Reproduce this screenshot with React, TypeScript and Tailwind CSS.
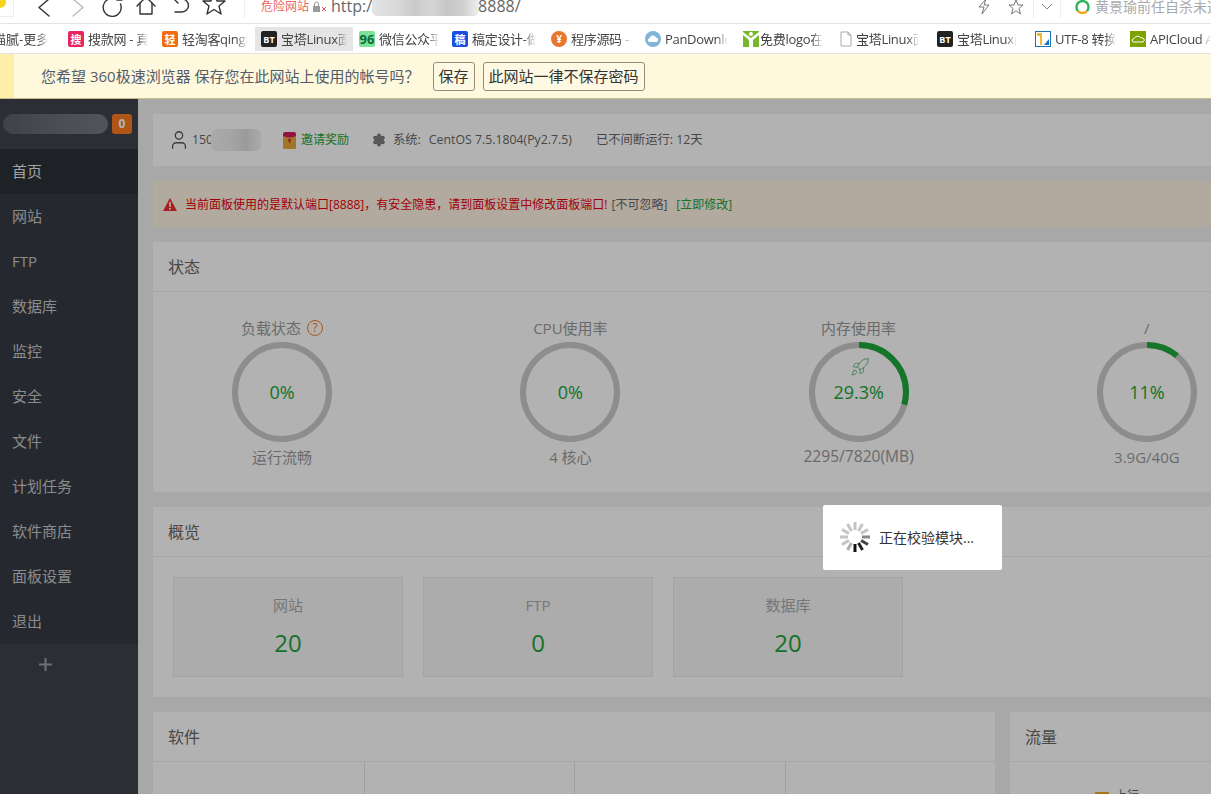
import { Rocket, User, Settings } from "lucide-react";

const font = "font-['Open_Sans','Noto_Sans_CJK_SC',sans-serif]";
const fade = "[mask-image:linear-gradient(to_right,black_82%,transparent)]";

function BookIcon({ bg, label, text = "text-white", size = "text-[11px]" }: { bg: string; label: string; text?: string; size?: string }) {
  return (
    <span className={`w-4 h-4 shrink-0 flex items-center justify-center rounded-[2px] font-bold leading-none overflow-hidden ${bg} ${text} ${size}`}>
      {label}
    </span>
  );
}

function Bookmark({ w, tw, label, icon, active }: { w: string; tw: string; label: string; icon: React.ReactNode; active?: boolean }) {
  return (
    <div className={`${w} shrink-0 h-[24px] flex items-center`}>
      <div className={`flex items-center gap-[4px] h-[24px] pl-[6px] -ml-[6px] pr-[6px] ${active ? "bg-[#e5e5e5]" : ""}`}>
        {icon}
        <span className={`${tw} block overflow-hidden whitespace-nowrap text-[13px] tracking-[-0.3px] leading-[24px] text-[#444] ${fade}`}>{label}</span>
      </div>
    </div>
  );
}

const stroke = { fill: "none", stroke: "#333", strokeWidth: 1.4, strokeLinejoin: "round" as const, strokeLinecap: "round" as const };

function ToolIcons() {
  return (
    <div className="flex gap-[8px] -mt-[6px] ml-[31px]">
      <svg width="26" height="26" viewBox="0 0 26 26" {...stroke}><path d="M18 5 L8 13.5 L18 22" /></svg>
      <svg width="26" height="26" viewBox="0 0 26 26" {...stroke} stroke="#bbb"><path d="M8 5 L18 13.5 L8 22" /></svg>
      <svg width="26" height="26" viewBox="0 0 26 26" {...stroke}><path d="M21.5 10 A9 9 0 1 1 17.5 5.5" /><path d="M18 1 V6 H23" /></svg>
      <svg width="26" height="26" viewBox="0 0 26 26" {...stroke}><path d="M4 12 L13 3 L22 12" /><path d="M7 9 V20 H19 V9" /></svg>
      <svg width="26" height="26" viewBox="0 0 26 26" {...stroke}><path d="M8 5 H15 A6 6 0 0 1 15 18 H8" /><path d="M11 1 L7 5 L11 9" /></svg>
      <svg width="26" height="26" viewBox="0 0 26 26" {...stroke}><path d="M13 -1 L16 7 L24 7 L18 12 L20 20 L13 15.5 L6 20 L8 12 L2 7 L10 7 Z" /></svg>
    </div>
  );
}

function TopBar() {
  return (
    <div className="h-[24px] shrink-0 flex items-start border-b border-[#e4e4e4] overflow-hidden bg-white relative">
      <div className="w-[14px] h-[17px] border-r border-b border-[#eee] overflow-hidden shrink-0 -mr-[14px]">
        <div className="w-[6px] h-[8px] bg-[#f8d21c] rounded-br-full" />
      </div>
      <ToolIcons />
      <div className="w-px h-[18px] bg-[#eee] ml-[17px]" />
      <span className="ml-[16px] mt-[1px] text-[12px] leading-[12px] text-[#e8695f]">危险网站</span>
      <svg className="ml-[3px] mt-[1px]" width="16" height="12" viewBox="0 0 16 12">
        <rect x="1" y="5" width="7" height="6" fill="#999" />
        <path d="M2.5 5 V3 A2 2 0 0 1 6.5 3 V5" fill="none" stroke="#999" />
        <path d="M10 6 L14 10 M14 6 L10 10" stroke="#e0584f" />
      </svg>
      <span className="ml-[3px] text-[16px] leading-[12px] text-[#666]">http:/</span>
      <div className="w-[107px] h-[16px] rounded-b-[5px] bg-[linear-gradient(to_right,#e4e4e4_0%,#d8d8d8_25%,#c9c9c9_40%,#d6d6d6_55%,#c6c6c6_70%,#cfcfcf_85%,#efefef_100%)]" />
      <span className="-ml-[1px] text-[16px] leading-[12px] text-[#666]">8888/</span>
      <div className="flex-1" />
      <svg className="mt-[-1px]" width="16" height="16" viewBox="0 0 16 16" fill="none" stroke="#777">
        <path d="M10 0 L3 8 H8 L6 15 L13 6 H8 Z" />
      </svg>
      <svg className="ml-[16px] mt-[-1px]" width="16" height="16" viewBox="0 0 16 16" fill="none" stroke="#777">
        <path d="M8 1 L10 6 L15 6 L11 9.5 L12.5 15 L8 11.8 L3.5 15 L5 9.5 L1 6 L6 6 Z" />
      </svg>
      <div className="w-px h-[18px] bg-[#eee] ml-[9px]" />
      <svg className="ml-[7px] mt-[3px]" width="12" height="8" viewBox="0 0 12 8" fill="none" stroke="#888">
        <path d="M1 1 L6 6 L11 1" />
      </svg>
      <div className="w-px h-[18px] bg-[#eee] ml-[7px]" />
      <svg className="ml-[14px] mt-[-1px] shrink-0" width="15" height="15" viewBox="0 0 15 15" fill="none" strokeWidth="2.4">
        <path d="M3 12 A6 6 0 1 1 12 12" stroke="#2fb35a" />
        <path d="M3 12 A6 6 0 0 0 12 12" stroke="#f5a623" />
      </svg>
      <span className="ml-[5px] w-[116px] overflow-hidden text-[14px] leading-[14px] text-[#aaa] whitespace-nowrap">黄景瑜前任自杀未遂</span>
    </div>
  );
}

function Bookmarks() {
  return (
    <div className="h-[30px] shrink-0 flex items-start pt-[3px] border-b border-[#e2e2e2] bg-white overflow-hidden">
      <span className="w-[68px] shrink-0 text-[13px] leading-[24px] text-[#444] whitespace-nowrap overflow-hidden">
        <span className={`block w-[55px] -ml-[7px] ${fade} overflow-hidden`}>猫腻-更多</span>
      </span>
      <Bookmark w="w-[94px]" tw="w-[60px]" label="搜款网 - 真" icon={<BookIcon bg="bg-[#e8265f]" label="搜" />} />
      <Bookmark w="w-[99px]" tw="w-[66px]" label="轻淘客qingt" icon={<BookIcon bg="bg-[#f26b0f]" label="轻" />} />
      <Bookmark w="w-[98px]" tw="w-[66px]" label="宝塔Linux面" active icon={<BookIcon bg="bg-[#222]" label="BT" size="text-[9px]" />} />
      <Bookmark w="w-[93px]" tw="w-[60px]" label="微信公众平" icon={<BookIcon bg="bg-[#7ce29a]" text="text-[#0b6b3a]" label="96" size="text-[13px]" />} />
      <Bookmark w="w-[99px]" tw="w-[64px]" label="稿定设计-做" icon={<BookIcon bg="bg-[#1a4fe0]" label="稿" />} />
      <Bookmark w="w-[94px]" tw="w-[60px]" label="程序源码 –" icon={<BookIcon bg="bg-[#e8762c] rounded-full" label="¥" size="text-[10px]" />} />
      <Bookmark
        w="w-[98px]"
        tw="w-[63px]"
        label="PanDownlo"
        icon={
          <svg className="shrink-0" width="16" height="16" viewBox="0 0 16 16">
            <circle cx="8" cy="8" r="8" fill="#7fb6d8" />
            <path d="M4 11 A2.2 2.2 0 0 1 4.5 7 A3.5 3.5 0 0 1 11 6.5 A2.4 2.4 0 0 1 12 11 Z" fill="#fff" />
          </svg>
        }
      />
      <Bookmark
        w="w-[95px]"
        tw="w-[63px]"
        label="免费logo在"
        icon={
          <svg className="shrink-0 -mr-[3px]" width="16" height="16" viewBox="0 0 16 16">
            <rect width="16" height="16" fill="#76b82a" />
            <circle cx="8" cy="3" r="2" fill="#fff" />
            <path d="M0 1 L8 7 L16 1 V4 L10 9 V16 H6 V9 L0 4 Z" fill="#fff" />
          </svg>
        }
      />
      <Bookmark
        w="w-[99px]"
        tw="w-[63px]"
        label="宝塔Linux面"
        icon={
          <svg className="shrink-0 -mr-[2px]" width="16" height="16" viewBox="0 0 16 16" fill="#fff" stroke="#aaa">
            <path d="M3 1 H10 L13 4 V15 H3 Z" />
            <path d="M10 1 V4 H13" fill="none" />
          </svg>
        }
      />
      <Bookmark w="w-[98px]" tw="w-[60px]" label="宝塔Linux面" icon={<BookIcon bg="bg-[#222]" label="BT" size="text-[9px]" />} />
      <Bookmark
        w="w-[95px]"
        tw="w-[61px]"
        label="UTF-8 转换"
        icon={
          <svg className="shrink-0" width="16" height="16" viewBox="0 0 16 16">
            <rect x="0.5" y="0.5" width="15" height="15" fill="#fff" stroke="#1a74bb" />
            <path d="M2 2 H7 V14 H5 V5 H2 Z" fill="#f2b632" />
            <path d="M9 14 L14 8 V14 Z" fill="#1a74bb" />
          </svg>
        }
      />
      <Bookmark
        w="w-[81px]"
        tw="w-[61px]"
        label="APICloud A"
        icon={
          <svg className="shrink-0" width="16" height="16" viewBox="0 0 16 16">
            <rect width="16" height="16" fill="#7ea300" />
            <path d="M3 11 A2 2 0 0 1 4 7.5 A4 4 0 0 1 11 7 A2 2 0 0 1 13 11 Z" fill="none" stroke="#fff" />
          </svg>
        }
      />
    </div>
  );
}

function InfoBar() {
  return (
    <div className="h-[45px] shrink-0 flex items-center bg-[#fef8dc] border-b border-[#c9bd8e]">
      <div className="w-[14px] h-full bg-[#fdeea8] border-r border-[#f7ecc0]" />
      <span className="ml-[27px] text-[15px] text-[#555c6a] whitespace-nowrap">您希望 360极速浏览器 保存您在此网站上使用的帐号吗？</span>
      <button className="ml-[13px] w-[42px] h-[29px] text-[15px] text-[#333] border border-[#948c78] rounded-[3px] bg-[#fef9e3]">保存</button>
      <button className="ml-[8px] w-[162px] h-[29px] text-[15px] text-[#333] border border-[#948c78] rounded-[3px] bg-[#fef9e3] whitespace-nowrap">此网站一律不保存密码</button>
    </div>
  );
}

const menu = ["首页", "网站", "FTP", "数据库", "监控", "安全", "文件", "计划任务", "软件商店", "面板设置", "退出"];

function Sidebar() {
  return (
    <aside className="w-[138px] shrink-0 bg-[#3e444d] flex flex-col">
      <div className="h-[50px] shrink-0 flex items-start pt-[15px] pl-[3px]">
        <div className="w-[105px] h-[20px] rounded-[10px] bg-[linear-gradient(to_right,#5a6068_0%,#646a72_30%,#6c7279_60%,#737980_95%)]" />
        <span className="ml-[4px] w-[20px] h-[20px] rounded-[3px] bg-[#fa7a22] text-white text-[12px] font-bold flex items-center justify-center">0</span>
      </div>
      <nav className="bg-[#353b44] flex flex-col">
        {menu.map((m, i) => (
          <div key={m} className={`h-[45px] pl-[12px] pb-[1px] flex items-center text-[15px] ${i === 0 ? "bg-[#2c3138] text-[#e8e8e8]" : "text-[#c8c8c8]"}`}>
            {m}
          </div>
        ))}
      </nav>
      <div className="h-[42px] flex items-center justify-center pr-[48px] pb-[1px] text-[#999]">
        <svg width="13" height="13" viewBox="0 0 13 13" fill="#a0a0a0">
          <rect x="5.5" width="2" height="13" />
          <rect y="5.5" width="13" height="2" />
        </svg>
      </div>
    </aside>
  );
}

function Ring({ pct, title, value, sub, rocket, help, subSize = "text-[15px]" }: { pct: number; title: string; value: string; sub: string; rocket?: boolean; help?: boolean; subSize?: string }) {
  const r = 47;
  const c = 2 * Math.PI * r;
  return (
    <div className="flex flex-col items-center">
      <div className="h-[20px] flex items-center text-[15px] text-[#999] whitespace-nowrap">
        {title}
        {help && <span className="ml-[6px] w-[16px] h-[16px] rounded-full border border-[#fa7a22] text-[#fa7a22] text-[12px] flex items-center justify-center leading-none">?</span>}
      </div>
      <div className="relative w-[100px] h-[100px] mt-[4px]">
        <svg width="100" height="100" viewBox="0 0 100 100" className="block">
          <circle cx="50" cy="50" r={r} fill="none" stroke="#cbcbcb" strokeWidth="6" />
          {pct > 0 && (
            <circle cx="50" cy="50" r={r} fill="none" stroke="#1eaa3a" strokeWidth="6" strokeDasharray={`${(c * pct) / 100} ${c}`} transform="rotate(-90 50 50)" />
          )}
        </svg>
        <div className="absolute inset-0 flex items-center justify-center text-[18px] text-[#20a53a]">{value}</div>
        {rocket && <Rocket className="absolute left-[41px] top-[15px] text-[#4fb069]" size={20} strokeWidth={1} />}
      </div>
      <div className={`mt-[5px] h-[20px] flex items-center text-[#999] whitespace-nowrap ${subSize}`}>{sub}</div>
    </div>
  );
}

function PanelHead({ title }: { title: string }) {
  return <div className="h-[50px] flex items-center pl-[15px] border-b border-[#eee] text-[16px] text-[#666]">{title}</div>;
}

function Card({ title, value }: { title: string; value: string }) {
  return (
    <div className="w-[230px] h-[100px] bg-[#f6f6f6] border border-[#eaeaea] flex flex-col items-center pt-[17px]">
      <div className="text-[15px] leading-[20px] text-[#aaa]">{title}</div>
      <div className="text-[24px] leading-[34px] mt-[11px] text-[#20a53a]">{value}</div>
    </div>
  );
}

function Main() {
  return (
    <main className="flex-1 min-w-0 overflow-hidden bg-[#f1f1f1] pl-[15px] pt-[15px] flex flex-col gap-[15px]">
      <div className="h-[52px] shrink-0 bg-white flex items-center pl-[15px] text-[12.3px] text-[#666] whitespace-nowrap">
        <User size={22} strokeWidth={1.4} className="text-[#555]" />
        <span className="ml-[2px] w-[72px] relative block">
          150
          <span className="absolute left-[19px] -top-[2px] w-[50px] h-[22px] bg-[linear-gradient(to_right,#f4f4f4,#ececec_40%,#dedede_70%,#f4f4f4)] rounded-[6px]" />
        </span>
        <svg className="ml-[19px]" width="13" height="17" viewBox="0 0 13 17">
          <rect y="2" width="13" height="15" rx="1.5" fill="#e8a93a" />
          <path d="M0 2 A2 2 0 0 1 2 0 H11 A2 2 0 0 1 13 2 V4 Q6.5 7 0 4 Z" fill="#d41c5c" />
          <path d="M5 7 H8 L6.5 12 Z" fill="#d41c5c" />
        </svg>
        <span className="ml-[5px] text-[12px] text-[#20a53a]">邀请奖励</span>
        <Settings className="ml-[23px] text-[#777]" size={14} fill="#888" />
        <span className="ml-[7px]">系统:</span>
        <span className="ml-[8px]">CentOS 7.5.1804(Py2.7.5)</span>
        <span className="ml-[24px]">已不间断运行: 12天</span>
      </div>

      <div className="h-[46px] shrink-0 bg-[#fff2e4] flex items-center pl-[10px] pt-[1px] text-[12px] whitespace-nowrap">
        <svg width="14" height="13" viewBox="0 0 14 13">
          <path d="M7 0 L14 13 H0 Z" fill="#ef2d2d" />
          <rect x="6.2" y="4" width="1.6" height="5" fill="#fff" />
          <rect x="6.2" y="10" width="1.6" height="1.6" fill="#fff" />
        </svg>
        <span className="ml-[8px] text-[#e8000b] font-normal">当前面板使用的是默认端口[8888]，有安全隐患，请到面板设置中修改面板端口!</span>
        <span className="ml-[4px] text-[#666]">[不可忽略]</span>
        <span className="ml-[9px] text-[#20a53a]">[立即修改]</span>
      </div>

      <section className="h-[250px] shrink-0 bg-white">
        <PanelHead title="状态" />
        <div className="-ml-[15px] w-[1153px] grid grid-cols-4 pt-[26px]">
          <Ring pct={0} title="负载状态" value="0%" sub="运行流畅" help />
          <Ring pct={0} title="CPU使用率" value="0%" sub="4 核心" />
          <Ring pct={29.3} title="内存使用率" value="29.3%" sub="2295/7820(MB)" subSize="text-[15.6px]" rocket />
          <Ring pct={11} title="/" value="11%" sub="3.9G/40G" />
        </div>
      </section>

      <section className="h-[190px] shrink-0 bg-white">
        <PanelHead title="概览" />
        <div className="flex gap-[20px] pl-[20px] pt-[20px]">
          <Card title="网站" value="20" />
          <Card title="FTP" value="0" />
          <Card title="数据库" value="20" />
        </div>
      </section>

      <div className="flex gap-[15px] flex-1 min-h-0">
        <section className="w-[842px] shrink-0 bg-white">
          <PanelHead title="软件" />
          <div className="grid grid-cols-[212px_210px_211px_1fr] h-full">
            <div className="border-r border-[#e4e4ee]" />
            <div className="border-r border-[#e4e4ee]" />
            <div className="border-r border-[#e4e4ee]" />
            <div />
          </div>
        </section>
        <section className="flex-1 bg-white overflow-hidden">
          <PanelHead title="流量" />
          <div className="flex items-center pl-[85px] pt-[28px]">
            <span className="w-[14px] h-[8px] bg-[#f5a623]" />
            <span className="ml-[6px] text-[12px] leading-[12px] text-[#666]">上行</span>
          </div>
        </section>
      </div>
    </main>
  );
}

function Spinner() {
  const colors = ["#8a8a8a", "#444", "#222", "#111", "#b0b0b0", "#c4c4c4", "#c4c4c4", "#c4c4c4", "#c4c4c4", "#c4c4c4", "#c4c4c4", "#c4c4c4"];
  return (
    <svg width="32" height="32" viewBox="0 0 32 32">
      {colors.map((c, i) => (
        <rect key={i} x="14.5" y="1" width="3" height="8" fill={c} transform={`rotate(${90 + i * 30} 16 16)`} />
      ))}
    </svg>
  );
}

export default function App() {
  return (
    <div className={`w-[1211px] h-[794px] overflow-hidden flex flex-col bg-white ${font}`}>
      <TopBar />
      <Bookmarks />
      <InfoBar />
      <div className="relative flex-1 min-h-0 flex">
        <Sidebar />
        <Main />
        <div className="absolute inset-0 bg-black/30" />
        <div className="absolute left-[823px] top-[406px] w-[179px] h-[65px] pb-[1px] bg-white rounded-[2px] flex items-center pl-[16px]">
          <Spinner />
          <span className="ml-[8px] text-[14px] text-[#333] whitespace-nowrap">正在校验模块...</span>
        </div>
      </div>
    </div>
  );
}
